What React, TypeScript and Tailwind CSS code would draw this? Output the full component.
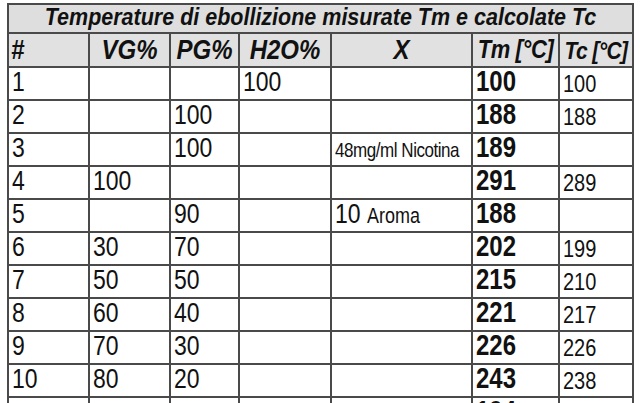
import React from "react";

type Cell = React.ReactNode;

const nic = <span className="text-[17px] tracking-[-0.45px]">48mg/ml Nicotina</span>;
const aroma = (
  <span>
    10 <span className="text-[18px]">Aroma</span>
  </span>
);

const rows: Cell[][] = [
  ["1", "", "", "100", "", "100", "100"],
  ["2", "", "100", "", "", "188", "188"],
  ["3", "", "100", "", nic, "189", ""],
  ["4", "100", "", "", "", "291", "289"],
  ["5", "", "90", "", aroma, "188", ""],
  ["6", "30", "70", "", "", "202", "199"],
  ["7", "50", "50", "", "", "215", "210"],
  ["8", "60", "40", "", "", "221", "217"],
  ["9", "70", "30", "", "", "226", "226"],
  ["10", "80", "20", "", "", "243", "238"],
  ["", "", "", "", "", "194", ""],
];

const bd = "border-2 border-[#4a4a4a]";

export default function App() {
  return (
    <div
      className="w-[640px] h-[403px] overflow-hidden bg-white pt-[3px] pl-[7px] text-[#111]"
      style={{ fontFamily: '"Liberation Sans", Arial, sans-serif' }}
    >
      <table className="table-fixed border-collapse w-[625px]">
        <colgroup>
          <col className="w-[81px]" />
          <col className="w-[81px]" />
          <col className="w-[69px]" />
          <col className="w-[92px]" />
          <col className="w-[141px]" />
          <col className="w-[87px]" />
          <col className="w-[74px]" />
        </colgroup>
        <tbody>
          <tr className="h-[29px]">
            <td colSpan={7} className={`${bd} bg-[#dedede] text-center align-middle p-0`}>
              <span className="inline-block text-[21.5px] font-bold italic leading-none scale-y-110 origin-center">
                Temperature di ebollizione misurate Tm e calcolate Tc
              </span>
            </td>
          </tr>
          <tr className="h-[34px] bg-[#e1e1e1]">
            {["#", "VG%", "PG%", "H2O%", "X", "Tm [°C]", "Tc [°C]"].map((h, i) => (
              <td
                key={i}
                className={`${bd} p-0 align-middle font-bold italic leading-none ${
                  i === 0 ? "text-left pl-[2px]" : "text-center"
                } ${i === 5 ? "text-[22px] tracking-[-0.4px]" : i === 6 ? "text-[21px] tracking-[-0.6px]" : "text-[24px]"}`}
              >
                <span className="inline-block scale-y-115">{h}</span>
              </td>
            ))}
          </tr>
          {rows.map((r, ri) => (
            <tr key={ri} className="h-[33px]">
              {r.map((c, ci) => (
                <td
                  key={ci}
                  className={`${bd} px-0 pl-[3px] align-bottom pb-[3px] leading-none ${
                    ci === 5
                      ? "font-bold text-[24px]"
                      : ci === 6
                      ? "text-[20px]"
                      : "text-[23px]"
                  }`}
                >
                  <span className="inline-block scale-y-120 origin-bottom whitespace-nowrap">{c}</span>
                </td>
              ))}
            </tr>
          ))}
        </tbody>
      </table>
    </div>
  );
}
